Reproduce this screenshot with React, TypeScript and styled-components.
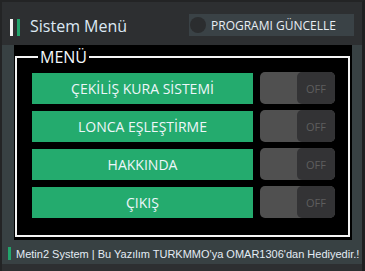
import styled, { createGlobalStyle } from "styled-components";

const GlobalStyle = createGlobalStyle`
  html, body {
    margin: 0;
    padding: 0;
    background: #1e1f20;
  }
  * {
    box-sizing: border-box;
  }
`;

const menuItems = [
  "ÇEKİLİŞ KURA SİSTEMİ",
  "LONCA EŞLEŞTİRME",
  "HAKKINDA",
  "ÇIKIŞ",
];

export default function App() {
  return (
    <>
      <GlobalStyle />
      <Window>
        <TitleBar>
          <Accent color="#f2f2f2" />
          <Accent color="#22a56c" />
          <Title>Sistem Menü</Title>
          <UpdateButton>
            <Dot />
            PROGRAMI GÜNCELLE
          </UpdateButton>
        </TitleBar>
        <Body>
          <Panel>
            <MenuBox>
              <Legend>MENÜ</Legend>
              <Rows>
                {menuItems.map((item) => (
                  <Row key={item}>
                    <MenuButton>{item}</MenuButton>
                    <Toggle>
                      <Thumb>OFF</Thumb>
                    </Toggle>
                  </Row>
                ))}
              </Rows>
            </MenuBox>
          </Panel>
          <StatusBar>
            <StatusMark />
            <StatusText>
              Metin2 System | Bu Yazılım TURKMMO'ya OMAR1306'dan Hediyedir.!
            </StatusText>
          </StatusBar>
        </Body>
      </Window>
    </>
  );
}

const Window = styled.div`
  width: 365px;
  height: 271px;
  background: #2d2f31;
  border-top: 2px solid #232425;
  border-left: 2px solid #232425;
  border-right: 3px solid #1e1f20;
  display: flex;
  flex-direction: column;
  overflow: hidden;
`;

const TitleBar = styled.div`
  height: 43px;
  flex-shrink: 0;
  display: flex;
  align-items: center;
  padding: 0 8px 0 8px;
  font-family: "Open Sans", "Noto Sans", sans-serif;
`;

const Accent = styled.span<{ color: string }>`
  width: 3px;
  height: 17px;
  margin-right: 4px;
  margin-top: 7px;
  background: ${(p) => p.color};
`;

const Title = styled.div`
  margin-left: 6px;
  margin-top: 5px;
  font-size: 16px;
  color: #dce8f4;
  flex: 1;
`;

const UpdateButton = styled.div`
  width: 165px;
  height: 22px;
  margin-top: 3px;
  margin-left: -2px;
  background: #3a4246;
  display: flex;
  align-items: center;
  gap: 5px;
  padding-left: 1px;
  font-size: 12px;
  color: #e8eef4;
`;

const Dot = styled.span`
  width: 16px;
  height: 16px;
  border-radius: 50%;
  background: #2b2d2f;
`;

const Body = styled.div`
  height: 219px;
  flex-shrink: 0;
  background: #384143;
  display: flex;
  flex-direction: column;
  padding: 0 10px 0 12px;
`;

const Panel = styled.div`
  height: 195px;
  background: #000;
  padding: 3px 2px 3px 1px;
  display: flex;
`;

const MenuBox = styled.fieldset`
  flex: 1;
  margin: 0;
  border: 2px solid #f4f4f4;
  padding: 6px 13px 0 15px;
  min-width: 0;
`;

const Legend = styled.legend`
  margin-left: 6px;
  padding: 0 2px;
  font-family: "Open Sans", "Noto Sans", sans-serif;
  font-size: 16px;
  line-height: 18px;
  color: #f4f8fc;
`;

const Rows = styled.div`
  display: flex;
  flex-direction: column;
  gap: 6px;
`;

const Row = styled.div`
  display: grid;
  grid-template-columns: 221px 75px;
  gap: 7px;
  align-items: center;
`;

const MenuButton = styled.div`
  height: 31px;
  background: #24ab6e;
  display: flex;
  align-items: center;
  justify-content: center;
  font-family: "Open Sans", "Noto Sans", sans-serif;
  font-size: 14px;
  color: #eef6fa;
`;

const Toggle = styled.div`
  height: 32px;
  border-radius: 5px;
  background: #505050;
  display: flex;
  justify-content: flex-end;
  overflow: hidden;
`;

const Thumb = styled.div`
  width: 38px;
  border-radius: 5px;
  background: #333335;
  display: flex;
  align-items: center;
  justify-content: center;
  font-family: "Open Sans", "Noto Sans", sans-serif;
  font-size: 11px;
  color: #5e5e5e;
`;

const StatusBar = styled.div`
  height: 21px;
  margin: 3px -7px 0 -9px;
  display: flex;
  align-items: center;
  padding-left: 3px;
  overflow: hidden;
`;

const StatusMark = styled.span`
  flex-shrink: 0;
  width: 3px;
  height: 13px;
  background: #22a56c;
  margin-right: 5px;
`;

const StatusText = styled.span`
  font-family: "Liberation Sans", Arial, sans-serif;
  font-size: 11px;
  color: #e4ecf4;
  white-space: nowrap;
`;
